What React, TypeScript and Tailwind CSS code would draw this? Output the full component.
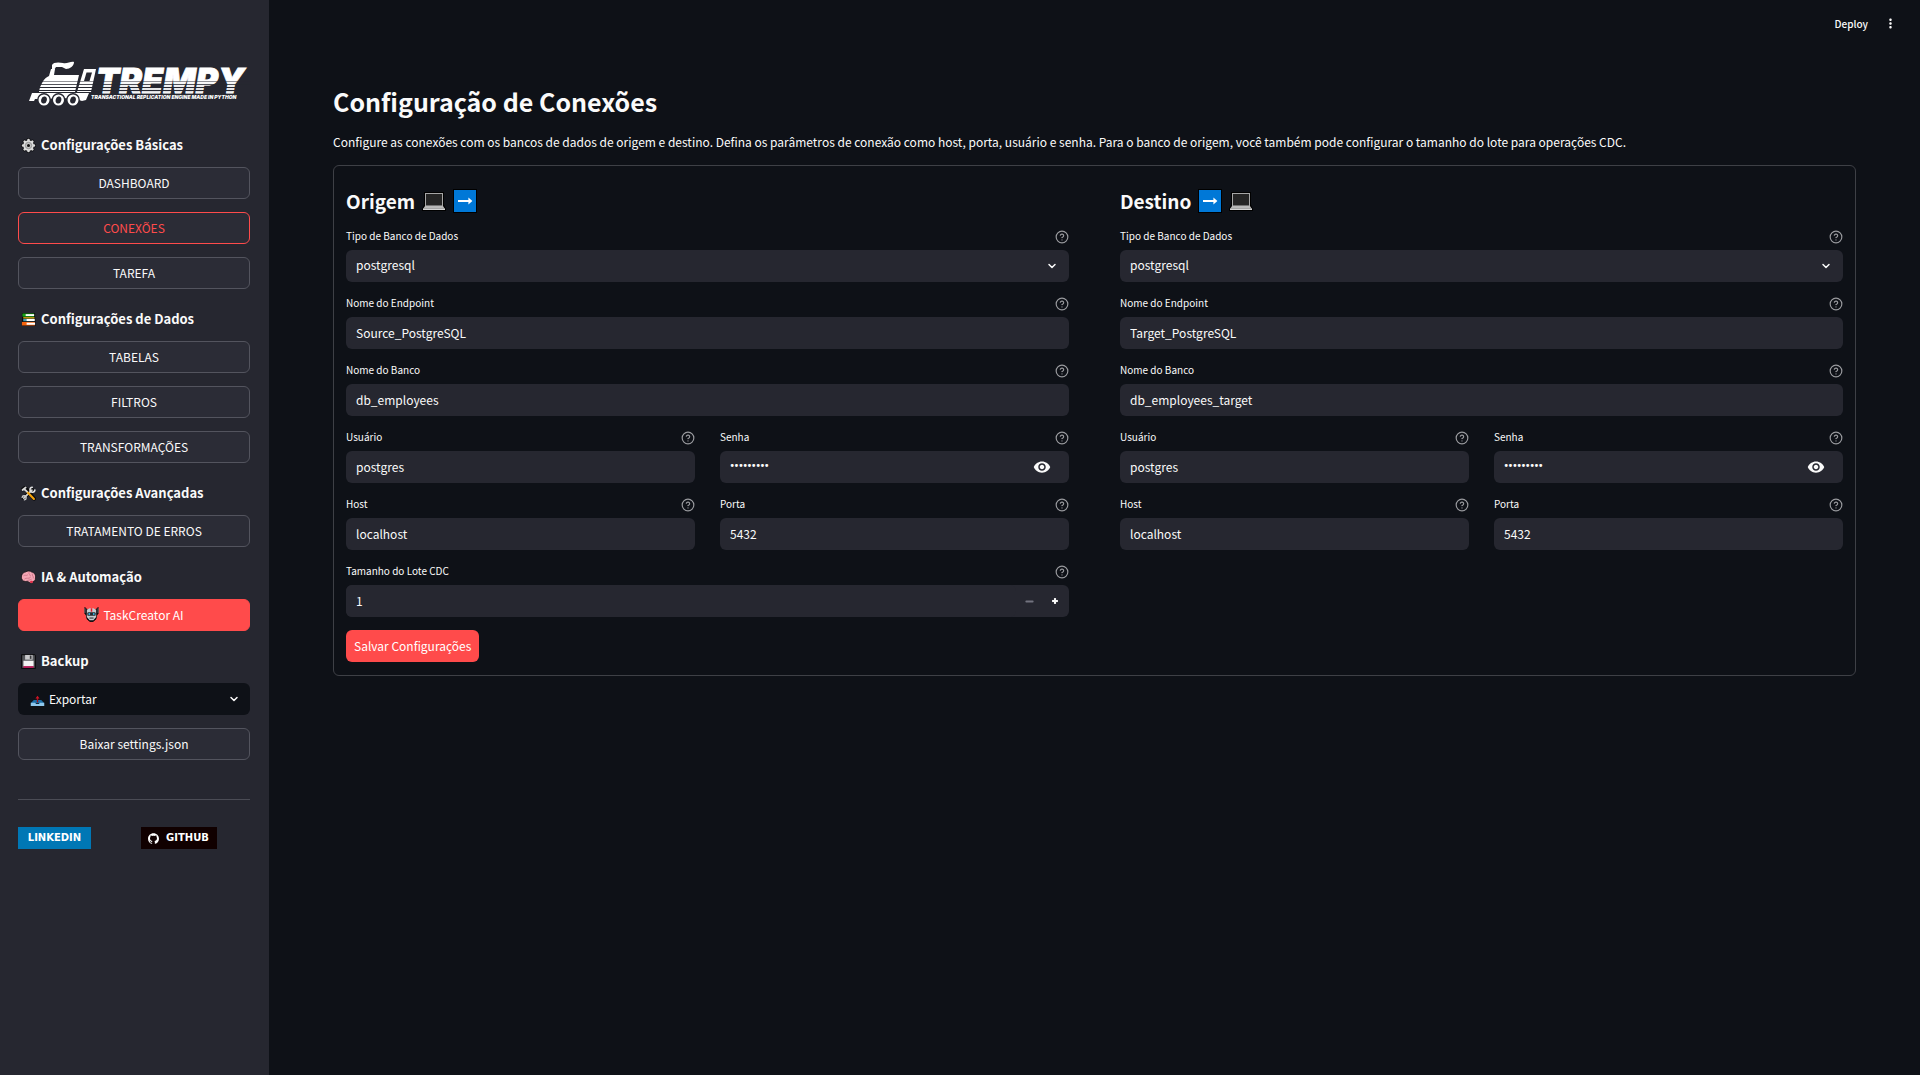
import { useState, type ReactNode } from "react";
import { ChevronDown, CircleHelp, Minus, Plus } from "lucide-react";
import { MdVisibility, MdMoreVert } from "react-icons/md";
import { SiGithub } from "react-icons/si";

function Logo() {
  return (
    <svg viewBox="0 0 222 46" className="h-[46px] w-[222px]" role="img" aria-label="Trempy">
      <defs>
        <linearGradient id="fade" x1="0" y1="0" x2="0" y2="1">
          <stop offset="0.5" stopColor="#ffffff" />
          <stop offset="1" stopColor="#c4c5ca" />
        </linearGradient>
      </defs>
      <g fill="#ffffff">
        <path d="M23 4 C24 1 30 1 34 2 C38 3 42 0 45 1 C45 5 41 8 37 8 L33 6 L27 6 L25 9 L23 8 Z" />
        <path d="M22 8 L26 8 L25 14 L50 14 L46 31 L10 31 C11 24 15 17 20 15 Z" />
        <path d="M55 8 L67 8 L62 31 L48 31 Z" />
        <path d="M3 32 L60 32 L57 39 L53 40 L44 37 L6 38 L5 40 L0 40 Z" />
      </g>
      <path d="M57.5 11.5 L63 11.5 L60.5 20 L55 20 Z" fill="#262730" />
      <text x="67" y="32" fontFamily="Inter" fontWeight="900" fontStyle="italic" fontSize="34" fill="url(#fade)" stroke="#ffffff" strokeWidth="0.8">
        TREMPY
      </text>
      <g stroke="#262730">
        <path d="M8 20.5H222" strokeWidth="0.5" />
        <path d="M8 23.5H222" strokeWidth="0.8" />
        <path d="M8 26.5H222" strokeWidth="1" />
        <path d="M8 29.5H222" strokeWidth="1.2" />
      </g>
      <g fill="#ffffff" stroke="#262730" strokeWidth="1.4">
        <circle cx="15" cy="39" r="6.2" />
        <circle cx="29.5" cy="39" r="6.2" />
        <circle cx="44" cy="39" r="6.2" />
      </g>
      <g fill="#262730">
        <ellipse cx="15" cy="39" rx="2.8" ry="3.6" transform="rotate(15 15 39)" />
        <ellipse cx="29.5" cy="39" rx="2.8" ry="3.6" transform="rotate(15 29.5 39)" />
        <ellipse cx="44" cy="39" rx="2.8" ry="3.6" transform="rotate(15 44 39)" />
      </g>
      <text x="62" y="38" fontFamily="Inter" fontWeight="900" fontStyle="italic" fontSize="5" fill="#ffffff">
        TRANSACTIONAL REPLICATION ENGINE MADE IN PYTHON
      </text>
    </svg>
  );
}

const small = "size-[15px] shrink-0";

function GearIcon() {
  return (
    <svg viewBox="0 0 16 16" className={small} aria-hidden="true">
      <g stroke="#0b0b0d" strokeWidth="4.4" strokeLinecap="round">
        <path d="M8 2.2V13.8M2.2 8H13.8M3.9 3.9L12.1 12.1M12.1 3.9L3.9 12.1" />
      </g>
      <g stroke="#dcdcdc" strokeWidth="2.8" strokeLinecap="round">
        <path d="M8 2.2V13.8M2.2 8H13.8M3.9 3.9L12.1 12.1M12.1 3.9L3.9 12.1" />
      </g>
      <circle cx="8" cy="8" r="5.6" fill="#dcdcdc" />
      <circle cx="8" cy="8" r="3.4" fill="#c4c4c4" stroke="#8c8c8c" strokeWidth="0.9" />
      <circle cx="8" cy="8" r="1.6" fill="#111111" />
    </svg>
  );
}

function BooksIcon() {
  return (
    <svg viewBox="0 0 16 16" className={small} aria-hidden="true">
      <path d="M1 1H15V5L15.5 10V15H1Z" fill="#0b0b0d" />
      <rect x="1.5" y="1.6" width="12.5" height="3.4" fill="#16a316" />
      <rect x="5" y="2.3" width="9" height="2" fill="#ffffff" />
      <rect x="2.4" y="5.6" width="12" height="1.3" fill="#f4c20d" />
      <rect x="2.4" y="7.4" width="12" height="2.4" fill="#3f9fb5" />
      <rect x="6" y="7.4" width="8.6" height="2.2" fill="#ffffff" />
      <rect x="1" y="10.6" width="13.8" height="3.8" fill="#f7630c" />
      <rect x="6" y="11.4" width="9" height="2.2" fill="#ffffff" />
    </svg>
  );
}

function ToolsIcon() {
  return (
    <svg viewBox="0 0 16 16" className={small} aria-hidden="true" fill="none" strokeLinecap="round">
      <path d="M3 13L12 4M1.8 3.6L4.2 1.8L6.4 4L14 13.6" stroke="#0b0b0d" strokeWidth="4" />
      <path d="M3 13L11.6 4.4" stroke="#cfcfcf" strokeWidth="1.9" />
      <path d="M12 1.4A2.6 2.6 0 1 0 14.8 4.2" stroke="#e2e2e2" strokeWidth="1.7" />
      <path d="M1.2 12.2A2.2 2.2 0 1 1 3.6 14.8" stroke="#cfcfcf" strokeWidth="1.4" />
      <path d="M7 6.6L13.8 13.8" stroke="#f5a30a" strokeWidth="2.2" />
      <path d="M1.6 4.2L5 1.6M3.4 3.2L6.4 6" stroke="#d8d8d8" strokeWidth="1.9" />
    </svg>
  );
}

function BrainIcon() {
  return (
    <svg viewBox="0 0 16 16" className={small} aria-hidden="true">
      <path d="M0.6 9C-0.2 5.5 2 2.6 4.6 2.2C7 0.6 10 0.8 11.4 2.2C14.4 2.6 16.2 5.8 15.4 8.6C15.6 11 14.4 12 13 12.2C13 14.4 11 15 9.4 13.4C8 12.8 7.4 12.4 6.8 12C4 12.8 1 11.6 0.6 9Z" fill="#f4a6b4" stroke="#0b0b0d" strokeWidth="0.8" />
      <path d="M9.4 13C10 11.4 11.4 11 12.8 12C13 14 10.8 14.6 9.4 13Z" fill="#e2304b" />
      <path d="M3 6C4.6 4.6 5.6 6.6 7 5.4M4 9.4C6 7.6 8 10 10 8M8.4 2.8C8 4.6 10 4.8 10 6.2M12 4.4C11.4 6.4 14 6.4 13.2 8.6M6.8 11.4C7.4 10.2 9 11.4 11 10" fill="none" stroke="#c76b80" strokeWidth="0.8" strokeLinecap="round" />
    </svg>
  );
}

function RobotIcon() {
  return (
    <svg viewBox="0 0 16 16" className={small} aria-hidden="true">
      <path d="M1 0.5L3.4 3H12.6L15 0.5V7L13.6 8.6L12.6 13L9.6 15.4H6.4L3.4 13L2.4 8.6L1 7Z" fill="#0b0b0d" stroke="#0b0b0d" />
      <path d="M1 1.4V6.4M15 1.4V6.4" stroke="#6d7277" strokeWidth="1" />
      <path d="M3 3L6 1.4H10L13 3V10.6L10 14H6L3 10.6Z" fill="#c8ccd0" />
      <rect x="7.2" y="1.4" width="1.6" height="3.6" fill="#e81224" />
      <rect x="3.6" y="5.6" width="8.8" height="3.8" rx="1" fill="#26282c" />
      <circle cx="5.6" cy="7.5" r="1" fill="#36b7e8" />
      <circle cx="10.4" cy="7.5" r="1" fill="#36b7e8" />
      <rect x="5.8" y="11.2" width="4.4" height="1.2" fill="#33363a" />
    </svg>
  );
}

function FloppyIcon() {
  return (
    <svg viewBox="0 0 16 16" className={small} aria-hidden="true">
      <path d="M0.5 0.5H14.5L15.5 1.5V15.5H0.5Z" fill="#2b2b2e" stroke="#0b0b0d" />
      <rect x="1.5" y="1.5" width="13" height="13.2" fill="#55565a" />
      <rect x="4.4" y="1" width="8" height="5" fill="#c9c9cb" />
      <rect x="9.4" y="1.6" width="1.8" height="3.6" fill="#3a3a3d" />
      <rect x="2.6" y="7.2" width="10.8" height="6" fill="#f3f3f3" />
      <rect x="2.6" y="13" width="10.8" height="1.8" fill="#c2185b" />
    </svg>
  );
}

function OutboxIcon() {
  return (
    <svg viewBox="0 0 16 16" className={small} aria-hidden="true">
      <path d="M4 8.6H12L15.2 12H0.8Z" fill="#1c6fa8" />
      <path d="M0.8 11.4H5.4L6.6 12.8H9.4L10.6 11.4H15.2V15H0.8Z" fill="#8fc7ec" />
      <path d="M8 11V6" stroke="#a80d1a" strokeWidth="1.4" />
      <path d="M8 4L10.2 6.8H5.8Z" fill="#d01425" />
    </svg>
  );
}

function LaptopIcon() {
  return (
    <svg viewBox="0 0 24 24" className="size-6 shrink-0" aria-hidden="true">
      <path d="M2 3H22V15.6L24 20V22H0V20L2 15.6Z" fill="#000000" />
      <rect x="3" y="4" width="18" height="13" fill="#a6a6a6" />
      <rect x="4" y="5" width="16" height="11.4" fill="#242424" />
      <path d="M3 17H21L22.6 19.6H1.4Z" fill="#b8b8b8" />
      <rect x="1" y="19.4" width="22" height="1.6" fill="#d4d4d4" />
    </svg>
  );
}

function ArrowIcon() {
  return (
    <svg viewBox="0 0 24 24" className="size-6 shrink-0" aria-hidden="true">
      <rect width="24" height="24" fill="#000000" />
      <rect x="1" y="1" width="22" height="22" fill="#0078d7" />
      <path d="M5 11H15.4V8.6L19.4 12L15.4 15.4V13H5Z" fill="#ffffff" />
    </svg>
  );
}

function SideHeading({ icon, children }: { icon: ReactNode; children: ReactNode }) {
  return (
    <h3 className="mt-2 flex h-[18px] items-center gap-[5px] pl-[3px] text-[13px] leading-[18px] font-bold">
      {icon}
      {children}
    </h3>
  );
}

function SideButton({ active, primary, children }: { active?: boolean; primary?: boolean; children: ReactNode }) {
  const tone = primary
    ? "border-[#ff4b4b] bg-[#ff4b4b] text-white"
    : active
      ? "border-[#ff4b4b] bg-[#2b2c36] text-[#ff4b4b]"
      : "border-[#53545e] bg-[#2b2c36]";
  return (
    <button type="button" className={"flex h-8 w-full items-center justify-center gap-1 rounded-md border pb-px text-[12px] " + tone}>
      {children}
    </button>
  );
}

function Sidebar() {
  return (
    <aside className="flex w-[269px] shrink-0 flex-col bg-[#262730] pt-[61px] pr-[19px] pl-[18px]">
      <div className="mb-[21px] pl-[11px]">
        <Logo />
      </div>
      <nav className="flex flex-col gap-[13px]">
        <SideHeading icon={<GearIcon />}>Configurações Básicas</SideHeading>
        <SideButton>DASHBOARD</SideButton>
        <SideButton active>CONEXÕES</SideButton>
        <SideButton>TAREFA</SideButton>
        <SideHeading icon={<BooksIcon />}>Configurações de Dados</SideHeading>
        <SideButton>TABELAS</SideButton>
        <SideButton>FILTROS</SideButton>
        <SideButton>TRANSFORMAÇÕES</SideButton>
        <SideHeading icon={<ToolsIcon />}>Configurações Avançadas</SideHeading>
        <SideButton>TRATAMENTO DE ERROS</SideButton>
        <SideHeading icon={<BrainIcon />}>IA &amp; Automação</SideHeading>
        <SideButton primary>
          <RobotIcon />
          TaskCreator AI
        </SideButton>
        <SideHeading icon={<FloppyIcon />}>Backup</SideHeading>
        <div className="relative flex h-8 items-center rounded-md bg-[#0e1117] pl-3">
          <OutboxIcon />
          <select aria-label="Backup" className="h-full w-full appearance-none bg-transparent pl-1 text-[12px] outline-none">
            <option>Exportar</option>
          </select>
          <ChevronDown className="pointer-events-none absolute right-[10px] size-3" strokeWidth={3} />
        </div>
        <SideButton>Baixar settings.json</SideButton>
      </nav>
      <hr className="mt-[39px] border-[#4b4c55]" />
      <div className="mt-[27px] grid grid-cols-2 gap-[13px] font-['DejaVu_Sans',sans-serif] text-[10px] leading-[22px] font-bold text-white">
        <a href="#linkedin" className="flex h-[22px] w-[73px] items-center justify-center bg-[#0077b5]">
          LINKEDIN
        </a>
        <a href="#github" className="flex h-[22px] w-[76px] items-center justify-center gap-[7px] bg-[#100000]">
          <SiGithub className="size-[11px]" />
          GITHUB
        </a>
      </div>
    </aside>
  );
}

const box = "h-8 w-full rounded-md bg-[#262730] px-[10px] pb-[2px] outline-none";

function Field({ id, label, children }: { id: string; label: string; children: ReactNode }) {
  return (
    <div className="min-w-0">
      <div className="mb-[5px] flex h-[17px] items-start justify-between">
        <label htmlFor={id} className="text-[10px] leading-4">
          {label}
        </label>
        <button type="button" aria-label={"Ajuda: " + label} className="mt-[2px] text-[#9a9b9f]">
          <CircleHelp className="size-[14px]" strokeWidth={2} />
        </button>
      </div>
      {children}
    </div>
  );
}

function TextField({ id, label, value }: { id: string; label: string; value: string }) {
  return (
    <Field id={id} label={label}>
      <input id={id} type="text" defaultValue={value} className={box + " text-[12px]"} />
    </Field>
  );
}

function PasswordField({ id }: { id: string }) {
  const [shown, setShown] = useState(false);
  return (
    <Field id={id} label="Senha">
      <div className="relative flex items-center">
        <input
          id={id}
          type={shown ? "text" : "password"}
          defaultValue="postgres1"
          className={box + (shown ? " text-[12px]" : " font-['Roboto',sans-serif] text-[12px] font-bold")}
        />
        <button type="button" aria-label="Mostrar senha" onClick={() => setShown(!shown)} className="absolute right-[18px]">
          <MdVisibility className="size-[18px]" />
        </button>
      </div>
    </Field>
  );
}

function NumberField({ id, label }: { id: string; label: string }) {
  const [size, setSize] = useState(1);
  return (
    <Field id={id} label={label}>
      <div className="flex h-8 items-center rounded-md bg-[#262730] pr-px">
        <input id={id} inputMode="numeric" value={size} onChange={(e) => setSize(Number(e.target.value) || 1)} className={box + " text-[12px]"} />
        <button type="button" aria-label="Diminuir" onClick={() => setSize(Math.max(1, size - 1))} className="flex h-8 w-[26px] shrink-0 items-center justify-center text-[#72737f]">
          <Minus className="size-[11px]" strokeWidth={4} />
        </button>
        <button type="button" aria-label="Aumentar" onClick={() => setSize(size + 1)} className="flex h-8 w-[26px] shrink-0 items-center justify-center">
          <Plus className="size-[10px]" strokeWidth={5} strokeLinecap="butt" />
        </button>
      </div>
    </Field>
  );
}

type EndpointProps = { id: string; title: string; icons: ReactNode; name: string; database: string; children?: ReactNode };

function Endpoint({ id, title, icons, name, database, children }: EndpointProps) {
  return (
    <section className="flex min-w-0 flex-1 flex-col gap-[13px]">
      <h2 className="flex h-9 items-center gap-[7px] pt-2 text-[19px] font-bold">
        {title}
        {icons}
      </h2>
      <Field id={id + "-type"} label="Tipo de Banco de Dados">
        <div className="relative flex items-center">
          <select id={id + "-type"} className={box + " appearance-none text-[12px]"}>
            <option>postgresql</option>
          </select>
          <ChevronDown className="pointer-events-none absolute right-[11px] size-3" strokeWidth={3} />
        </div>
      </Field>
      <TextField id={id + "-name"} label="Nome do Endpoint" value={name} />
      <TextField id={id + "-database"} label="Nome do Banco" value={database} />
      <div className="grid grid-cols-2 gap-[25px]">
        <TextField id={id + "-user"} label="Usuário" value="postgres" />
        <PasswordField id={id + "-password"} />
      </div>
      <div className="grid grid-cols-2 gap-[25px]">
        <TextField id={id + "-host"} label="Host" value="localhost" />
        <TextField id={id + "-port"} label="Porta" value="5432" />
      </div>
      {children}
    </section>
  );
}

export default function App() {
  return (
    <div className="flex min-h-screen bg-[#0e1117] font-['Noto_Sans_CJK_SC',sans-serif] text-[#fafafa]">
      <Sidebar />
      <div className="flex min-w-0 flex-1 flex-col">
        <header className="flex h-[46px] items-center justify-end gap-[15px] pr-[22px]">
          <button type="button" className="text-[10px] font-medium">
            Deploy
          </button>
          <button type="button" aria-label="Menu">
            <MdMoreVert className="size-[15px]" />
          </button>
        </header>
        <main className="flex flex-col px-16 pt-[34px]">
          <h1 className="text-[25px] leading-[42px] font-bold">Configuração de Conexões</h1>
          <p className="mt-[10px] mb-[13px] text-[12px] leading-5">
            Configure as conexões com os bancos de dados de origem e destino. Defina os parâmetros de conexão como host, porta, usuário e senha. Para o banco de origem, você também pode configurar o tamanho do lote para operações CDC.
          </p>
          <form onSubmit={(e) => e.preventDefault()} className="flex flex-col items-start gap-[13px] rounded-md border border-[#3e4046] px-3 py-[13px]">
            <div className="flex w-full gap-[51px]">
              <Endpoint id="source" title="Origem" icons={<><LaptopIcon /><ArrowIcon /></>} name="Source_PostgreSQL" database="db_employees">
                <NumberField id="source-batch" label="Tamanho do Lote CDC" />
              </Endpoint>
              <Endpoint id="target" title="Destino" icons={<><ArrowIcon /><LaptopIcon /></>} name="Target_PostgreSQL" database="db_employees_target" />
            </div>
            <button type="submit" className="h-8 rounded-md bg-[#ff4b4b] px-2 text-[12px] text-white">
              Salvar Configurações
            </button>
          </form>
        </main>
      </div>
    </div>
  );
}
